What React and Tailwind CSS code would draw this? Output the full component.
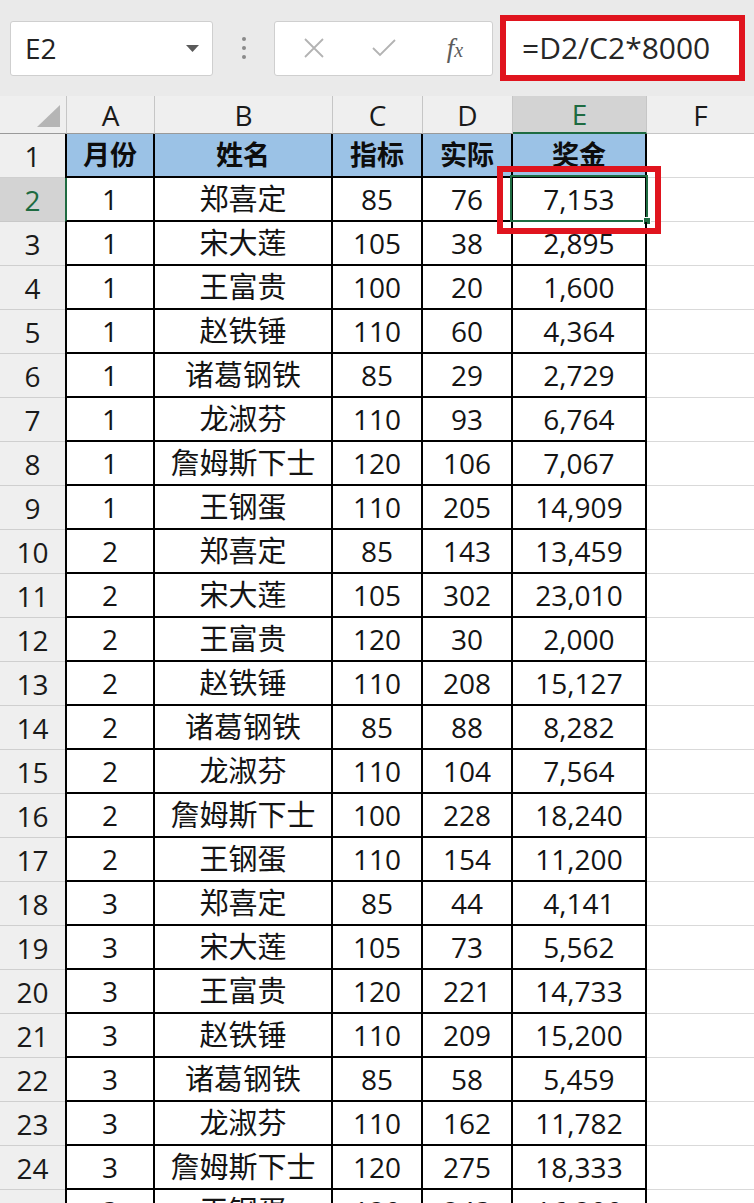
import React from "react";

const rows = [
  [1, "郑喜定", 85, 76, "7,153"],
  [1, "宋大莲", 105, 38, "2,895"],
  [1, "王富贵", 100, 20, "1,600"],
  [1, "赵铁锤", 110, 60, "4,364"],
  [1, "诸葛钢铁", 85, 29, "2,729"],
  [1, "龙淑芬", 110, 93, "6,764"],
  [1, "詹姆斯下士", 120, 106, "7,067"],
  [1, "王钢蛋", 110, 205, "14,909"],
  [2, "郑喜定", 85, 143, "13,459"],
  [2, "宋大莲", 105, 302, "23,010"],
  [2, "王富贵", 120, 30, "2,000"],
  [2, "赵铁锤", 110, 208, "15,127"],
  [2, "诸葛钢铁", 85, 88, "8,282"],
  [2, "龙淑芬", 110, 104, "7,564"],
  [2, "詹姆斯下士", 100, 228, "18,240"],
  [2, "王钢蛋", 110, 154, "11,200"],
  [3, "郑喜定", 85, 44, "4,141"],
  [3, "宋大莲", 105, 73, "5,562"],
  [3, "王富贵", 120, 221, "14,733"],
  [3, "赵铁锤", 110, 209, "15,200"],
  [3, "诸葛钢铁", 85, 58, "5,459"],
  [3, "龙淑芬", 110, 162, "11,782"],
  [3, "詹姆斯下士", 120, 275, "18,333"],
  [3, "王钢蛋", 120, 243, "16,200"],
];

function TopBar() {
  return (
    <div className="h-[96px] bg-[#eaeaea] flex items-center pl-[10px]">
      <div className="w-[203px] h-[55px] bg-white border border-[#cfcfcf] rounded-[3px] flex items-center justify-between pl-[14px] pr-[13px]">
        <span className="text-[28px] text-[#222] leading-none">E2</span>
        <svg width="13" height="7" viewBox="0 0 13 7">
          <path d="M0 0 L13 0 L6.5 7 Z" fill="#5a5a5a" />
        </svg>
      </div>
      <div className="w-[61px] h-[55px] flex flex-col items-center justify-center gap-[5px]">
        <div className="w-[4px] h-[4px] rounded-full bg-[#8a8a8a]" />
        <div className="w-[4px] h-[4px] rounded-full bg-[#8a8a8a]" />
        <div className="w-[4px] h-[4px] rounded-full bg-[#8a8a8a]" />
      </div>
      <div className="w-[219px] h-[55px] bg-white border border-[#cfcfcf] rounded-[3px] flex items-center">
        <div className="w-[76px] flex items-center justify-center pl-[2px]">
          <svg width="22" height="22" viewBox="0 0 22 22">
            <path d="M2 2 L20 20 M20 2 L2 20" stroke="#b3b3b3" strokeWidth="1.8" />
          </svg>
        </div>
        <div className="w-[68px] flex items-center justify-center">
          <svg width="26" height="20" viewBox="0 0 26 20">
            <path d="M2 10 L9 17 L24 2" stroke="#b3b3b3" strokeWidth="1.8" fill="none" />
          </svg>
        </div>
        <div className="w-[75px] flex items-center justify-center">
          <span className="font-['Liberation_Serif',serif] italic text-[27px] text-[#5c5c5c] leading-none">
            f<span className="text-[20px] italic">x</span>
          </span>
        </div>
      </div>
      <div className="ml-[7px] w-[245px] h-[66px] border-[6px] border-[#e0141e] bg-white flex items-center pl-[16px]">
        <span className="text-[30px] text-[#262626] leading-none">=D2/C2*8000</span>
      </div>
    </div>
  );
}

function ColHeader() {
  return (
    <div className="flex h-[38px] bg-[#efefef]">
      <div className="w-[67px] border-r border-[#c6c6c6] border-b border-b-[#9a9a9a] relative">
        <svg className="absolute left-[37px] top-[9px]" width="23" height="22" viewBox="0 0 23 22">
          <path d="M23 0 L23 22 L0 22 Z" fill="#b5b5b5" />
        </svg>
      </div>
      <div className="w-[88px] border-r border-[#c6c6c6] border-b border-b-[#9a9a9a] flex items-center justify-center text-[28px] text-[#1a1a1a]">A</div>
      <div className="w-[178px] border-r border-[#c6c6c6] border-b border-b-[#9a9a9a] flex items-center justify-center text-[28px] text-[#1a1a1a]">B</div>
      <div className="w-[90px] border-r border-[#c6c6c6] border-b border-b-[#9a9a9a] flex items-center justify-center text-[28px] text-[#1a1a1a]">C</div>
      <div className="w-[90px] border-r border-[#c6c6c6] border-b border-b-[#9a9a9a] flex items-center justify-center text-[28px] text-[#1a1a1a]">D</div>
      <div className="w-[134px] border-r border-[#c6c6c6] bg-[#d3d3d3] border-b-2 border-b-[#1e6b41] flex items-center justify-center text-[28px] text-[#1e6b41]">E</div>
      <div className="flex-1 border-b border-[#c6c6c6] flex items-center justify-center text-[28px] text-[#1a1a1a]">F</div>
    </div>
  );
}

function HeaderRow() {
  return (
    <div className="flex h-[44px]">
      <div className="w-[65px] bg-[#efefef] border-b border-[#cfcfcf] flex items-center justify-center text-[28px] text-[#1a1a1a]">1</div>
      <div className="w-[90px] bg-[#9bc2e6] border-l-2 border-r-2 border-b-2 border-black flex items-center justify-center text-[27px] font-bold text-[#0d0d0d]">月份</div>
      <div className="w-[178px] bg-[#9bc2e6] border-r-2 border-b-2 border-black flex items-center justify-center text-[27px] font-bold text-[#0d0d0d]">姓名</div>
      <div className="w-[90px] bg-[#9bc2e6] border-r-2 border-b-2 border-black flex items-center justify-center text-[27px] font-bold text-[#0d0d0d]">指标</div>
      <div className="w-[90px] bg-[#9bc2e6] border-r-2 border-b-2 border-black flex items-center justify-center text-[27px] font-bold text-[#0d0d0d]">实际</div>
      <div className="w-[134px] bg-[#9bc2e6] border-r-2 border-b-2 border-black flex items-center justify-center text-[27px] font-bold text-[#0d0d0d]">奖金</div>
      <div className="flex-1 border-b border-[#d9d9d9]" />
    </div>
  );
}

function DataRow({ n, r }) {
  const sel = n === 2;
  return (
    <div className="flex h-[44px]">
      <div
        className={
          sel
            ? "w-[65px] bg-[#d3d3d3] border-b border-[#c8c8c8] flex items-center justify-center text-[28px] text-[#1e6b41]"
            : "w-[65px] bg-[#efefef] border-b border-[#cfcfcf] flex items-center justify-center text-[28px] text-[#1a1a1a]"
        }
      >
        {n}
      </div>
      <div className={sel ? "w-[90px] border-l-2 border-l-[#1e6b41] border-r-2 border-b-2 border-black flex items-center justify-center text-[28px] text-[#141414]" : "w-[90px] border-l-2 border-r-2 border-b-2 border-black flex items-center justify-center text-[28px] text-[#141414]"}>{r[0]}</div>
      <div className="w-[178px] border-r-2 border-b-2 border-black flex items-center justify-center text-[29px] text-[#141414]">{r[1]}</div>
      <div className="w-[90px] border-r-2 border-b-2 border-black flex items-center justify-center text-[28px] text-[#141414]">{r[2]}</div>
      <div className="w-[90px] border-r-2 border-b-2 border-black flex items-center justify-center text-[28px] text-[#141414]">{r[3]}</div>
      <div className="w-[134px] border-r-2 border-b-2 border-black flex items-center justify-center text-[28px] text-[#141414] relative">
        {r[4]}
        {sel && (
          <>
            <div className="absolute left-[-3px] top-[-3px] right-[-3px] bottom-[-2px] border-2 border-[#1e6b41]" />
            <div className="absolute right-[-6px] bottom-[-5px] w-[8px] h-[8px] bg-[#1e6b41] border border-white" />
          </>
        )}
      </div>
      <div className="flex-1 border-b border-[#d9d9d9]" />
    </div>
  );
}

export default function App() {
  return (
    <div className="w-[754px] h-[1203px] overflow-hidden relative bg-white font-['Open_Sans','Noto_Sans_CJK_SC',sans-serif]">
      <TopBar />
      <ColHeader />
      <HeaderRow />
      {rows.map((r, i) => (
        <DataRow key={i} n={i + 2} r={r} />
      ))}
      <div className="absolute left-[497px] top-[166px] w-[164px] h-[68px] border-[6px] border-[#e0141e] pointer-events-none" />
    </div>
  );
}
